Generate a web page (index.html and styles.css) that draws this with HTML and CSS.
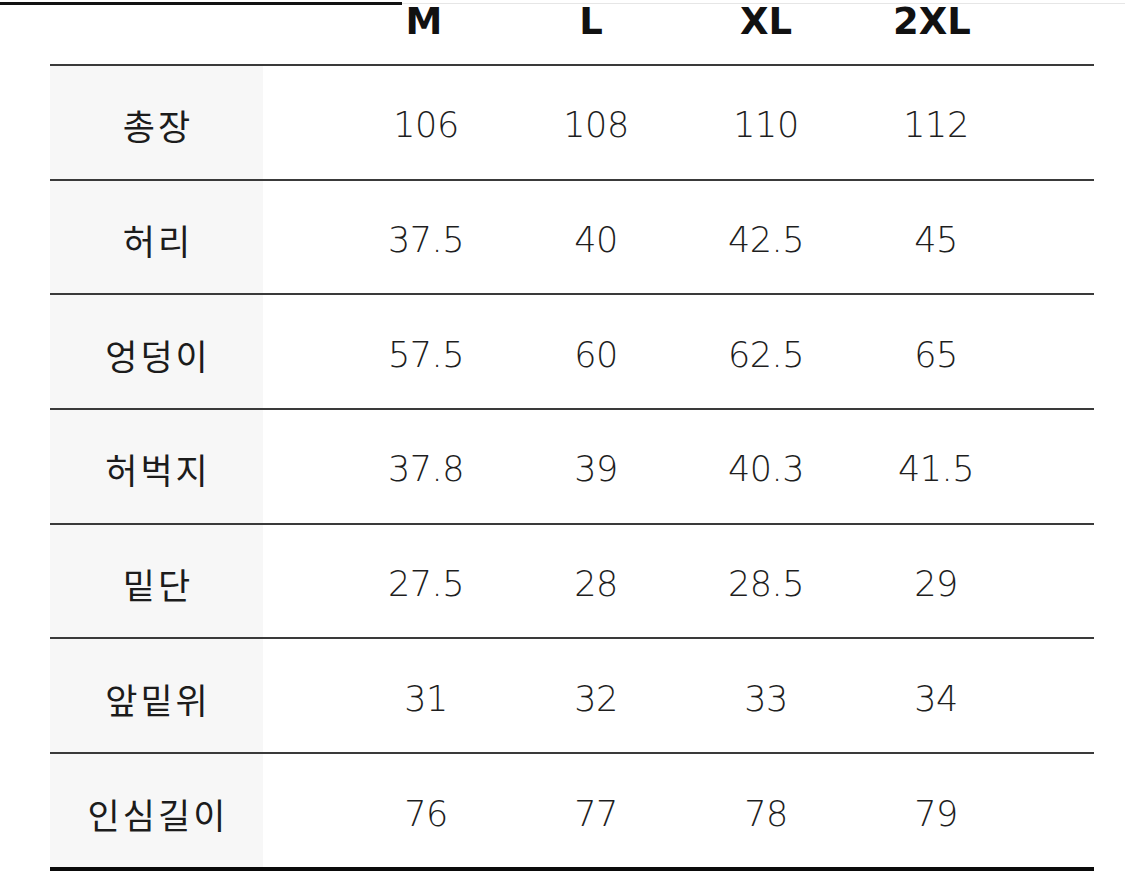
FILE: index.html
```html
<!DOCTYPE html>
<html lang="ko">
<head>
<meta charset="utf-8">
<title>사이즈표</title>
<link rel="stylesheet" href="styles.css">
</head>
<body>
<div class="top-rule"><span class="rule-dark"></span><span class="rule-light"></span></div>
<div class="size-table">
  <div class="row head">
    <div class="label"></div>
    <div class="vals"><span>M</span><span>L</span><span>XL</span><span>2XL</span></div>
  </div>
  <div class="row">
    <div class="label">총장</div>
    <div class="vals"><span>106</span><span>108</span><span>110</span><span>112</span></div>
  </div>
  <div class="row">
    <div class="label">허리</div>
    <div class="vals"><span>37.5</span><span>40</span><span>42.5</span><span>45</span></div>
  </div>
  <div class="row">
    <div class="label">엉덩이</div>
    <div class="vals"><span>57.5</span><span>60</span><span>62.5</span><span>65</span></div>
  </div>
  <div class="row">
    <div class="label">허벅지</div>
    <div class="vals"><span>37.8</span><span>39</span><span>40.3</span><span>41.5</span></div>
  </div>
  <div class="row">
    <div class="label">밑단</div>
    <div class="vals"><span>27.5</span><span>28</span><span>28.5</span><span>29</span></div>
  </div>
  <div class="row">
    <div class="label">앞밑위</div>
    <div class="vals"><span>31</span><span>32</span><span>33</span><span>34</span></div>
  </div>
  <div class="row last">
    <div class="label">인심길이</div>
    <div class="vals"><span>76</span><span>77</span><span>78</span><span>79</span></div>
  </div>
</div>
</body>
</html>
```
FILE: styles.css
```css
html, body {
  margin: 0;
  padding: 0;
  background: #ffffff;
}

body {
  font-family: "DejaVu Sans", "Noto Sans CJK KR", sans-serif;
  color: #222222;
}

.top-rule {
  display: flex;
  align-items: center;
  height: 5px;
  padding-top: 1px;
  box-sizing: border-box;
}

.rule-dark {
  display: block;
  width: 402px;
  height: 3px;
  background: #111111;
}

.rule-light {
  display: block;
  flex: 1;
  height: 1px;
  background: #e6e6e6;
}

.size-table {
  margin-left: 50px;
  width: 1044px;
}

.row {
  display: flex;
  height: 114.7px;
  box-sizing: border-box;
  border-top: 2px solid #3a3a3a;
}

.row.head {
  height: 59px;
  border-top: none;
}

.row.last {
  height: 119px;
  border-bottom: 4px solid #0a0a0a;
}

.label {
  width: 213px;
  flex: none;
  display: flex;
  align-items: center;
  justify-content: center;
  background: #f7f7f7;
  font-family: "Noto Sans CJK KR", sans-serif;
  font-size: 35px;
  letter-spacing: 3px;
  text-indent: 3px;
  color: #1c1c1c;
  padding-top: 5px;
  box-sizing: border-box;
}

.head .label {
  background: transparent;
}

.vals {
  display: grid;
  grid-template-columns: repeat(4, 170px);
  padding-left: 78px;
  align-items: center;
}

.vals span {
  text-align: center;
  font-size: 35px;
  font-weight: 200;
  color: #1e1e1e;
  letter-spacing: -0.5px;
  padding-top: 6px;
}

.head .vals {
  align-items: start;
}

.head .vals span {
  font-size: 37px;
  font-weight: 700;
  line-height: 34px;
  color: #111111;
  letter-spacing: 0;
  padding-top: 0;
}

.head .vals span:nth-child(1) {
  margin-right: 4px;
}

.head .vals span:nth-child(2) {
  margin-right: 10px;
}

.head .vals span:nth-child(4) {
  margin-right: 8px;
}
```
